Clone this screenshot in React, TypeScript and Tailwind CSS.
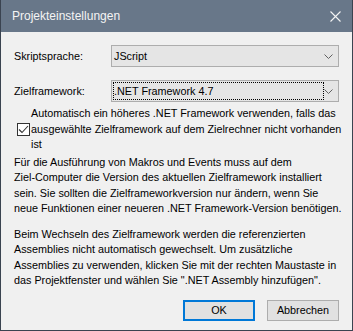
import React from "react";

const font = { fontFamily: '"Liberation Sans", Arial, sans-serif' };

function Chevron() {
  return (
    <svg width="9" height="5" viewBox="0 0 9 5" className="shrink-0">
      <path d="M0.5 0.5 L4.5 4.5 L8.5 0.5" fill="none" stroke="#606060" strokeWidth="1" />
    </svg>
  );
}

export default function App() {
  return (
    <div
      className="w-[353px] h-[331px] bg-[#f0f0f0] border-x border-b border-[#3a4350] flex flex-col text-[10.8px] text-black overflow-hidden"
      style={font}
    >
      <div className="h-[32px] shrink-0 bg-[#687789] flex items-center justify-between pl-[11px] pr-[11px]">
        <span className="text-[#f4f4f4] text-[12px]">Projekteinstellungen</span>
        <svg width="11" height="11" viewBox="0 0 11 11">
          <path d="M0.5 0.5 L10.5 10.5 M10.5 0.5 L0.5 10.5" stroke="#f4f4f4" strokeWidth="1.1" />
        </svg>
      </div>
      <div className="flex flex-col pl-[13px] pr-[13px] pt-[13px] flex-1">
        <div className="flex items-center">
          <span className="w-[97px] shrink-0">Skriptsprache:</span>
          <div className="w-[228px] h-[22px] bg-[#e5e5e5] border border-[#adadad] flex items-center justify-between pl-[2px] pr-[5px]">
            <span>JScript</span>
            <Chevron />
          </div>
        </div>
        <div className="flex items-center mt-[13px]">
          <span className="w-[97px] shrink-0">Zielframework:</span>
          <div className="w-[228px] h-[22px] bg-[#e5e5e5] border border-[#adadad] flex items-center justify-between pl-[1px] pr-[5px]">
            <span className="h-[18px] w-[211px] border border-dotted border-black flex items-center leading-none">
              .NET Framework 4.7
            </span>
            <Chevron />
          </div>
        </div>
        <div className="flex items-center mt-[4px]">
          <div className="w-[13px] h-[13px] ml-[3px] border border-[#333] bg-white flex items-center justify-center shrink-0">
            <svg width="11" height="9" viewBox="0 0 11 9">
              <path d="M1 4.5 L4 7.5 L10 1" fill="none" stroke="#333" strokeWidth="1.1" />
            </svg>
          </div>
          <div className="ml-[1px] leading-[15.5px] whitespace-nowrap">
            Automatisch ein höheres .NET Framework verwenden, falls das
            <br />
            ausgewählte Zielframework auf dem Zielrechner nicht vorhanden
            <br />
            ist
          </div>
        </div>
        <div className="mt-[2px] leading-[15.5px] whitespace-nowrap">
          Für die Ausführung von Makros und Events muss auf dem
          <br />
          Ziel-Computer die Version des aktuellen Zielframework installiert
          <br />
          sein. Sie sollten die Zielframeworkversion nur ändern, wenn Sie
          <br />
          neue Funktionen einer neueren .NET Framework-Version benötigen.
        </div>
        <div className="mt-[10px] leading-[15.5px] whitespace-nowrap">
          Beim Wechseln des Zielframework werden die referenzierten
          <br />
          Assemblies nicht automatisch gewechselt. Um zusätzliche
          <br />
          Assemblies zu verwenden, klicken Sie mit der rechten Maustaste in
          <br />
          das Projektfenster und wählen Sie ".NET Assembly hinzufügen".
        </div>
        <div className="flex justify-end gap-[12px] mt-auto mb-[9px]">
          <button className="w-[72px] h-[21px] bg-[#e1e1e1] border-2 border-[#0078d7] flex items-center justify-center">
            OK
          </button>
          <button className="w-[72px] h-[21px] bg-[#e1e1e1] border border-[#adadad] flex items-center justify-center">
            Abbrechen
          </button>
        </div>
      </div>
    </div>
  );
}
